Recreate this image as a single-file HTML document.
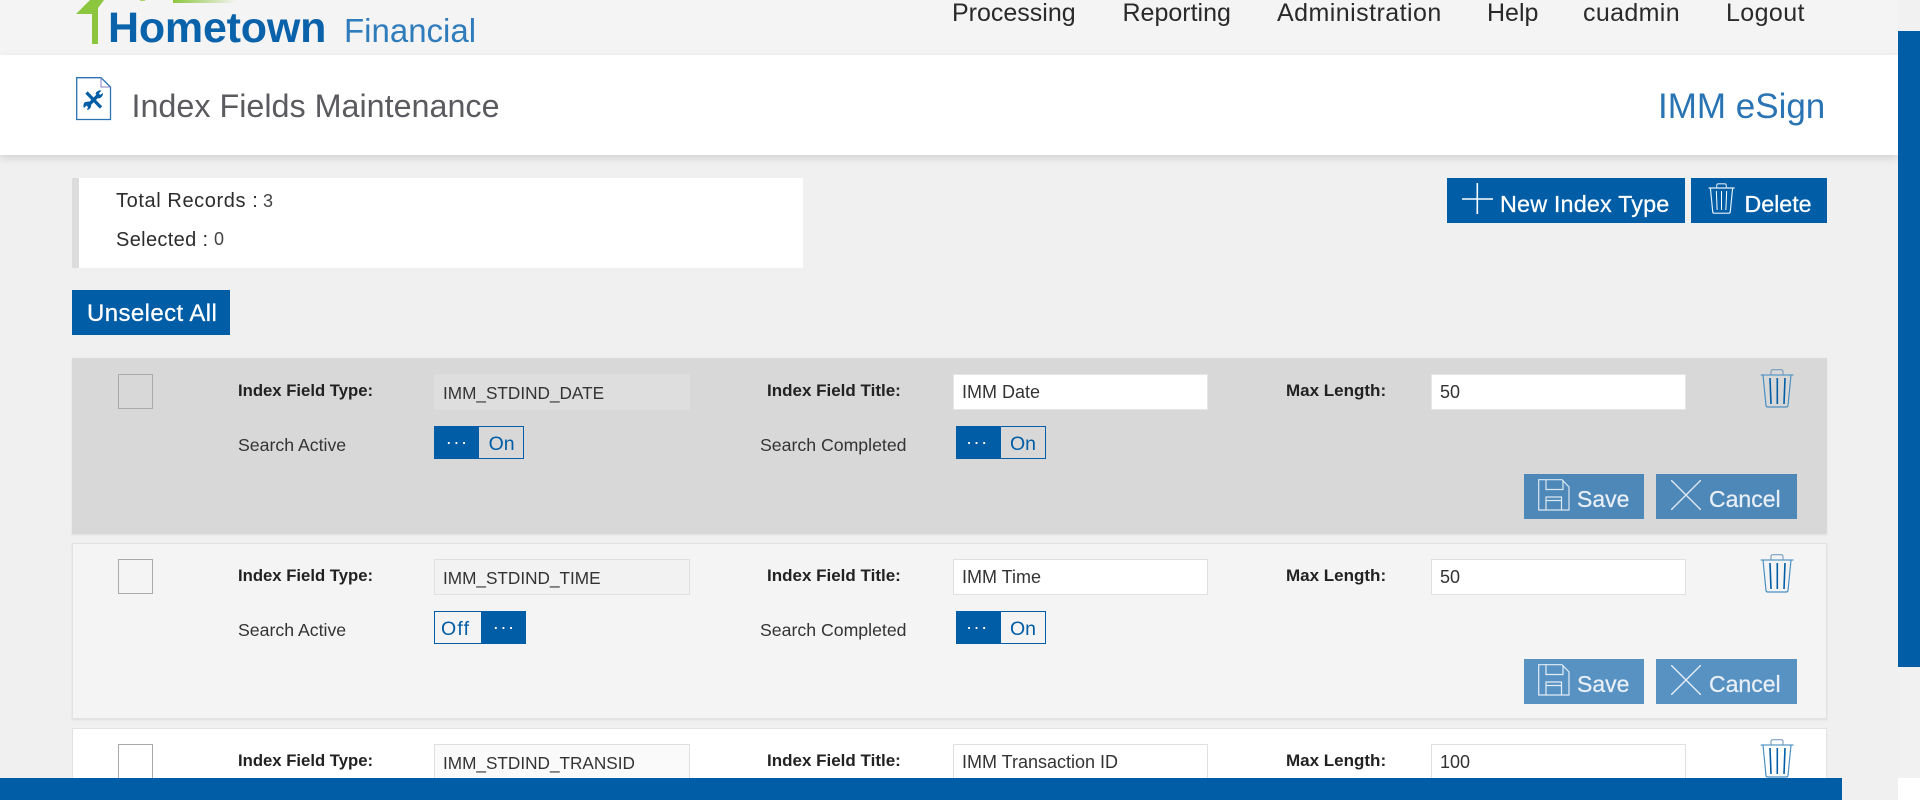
<!DOCTYPE html>
<html lang="en">
<head>
<meta charset="utf-8">
<title>Index Fields Maintenance</title>
<style>
html,body{margin:0;padding:0;width:1920px;height:800px;overflow:hidden;background:#f0f0f0;font-family:"Liberation Sans",sans-serif;color:#333}
#page{position:relative;width:1920px;height:800px;overflow:hidden;background:#f0f0f0}
.a,.t,svg{position:absolute;display:block}
.t{line-height:0;white-space:nowrap}
.nav{top:13.3px;font-size:25px;color:#2a2a2a}
.row{position:absolute;left:72px;width:1755px;height:176px}
.l{font-weight:bold;color:#222}
.i{position:absolute;top:16px;height:36px;box-sizing:border-box;border:1px solid #e0e0e0;background:#fff}
.tg{position:absolute;top:68px;height:33px;box-sizing:border-box;border:1px solid #005da6}
.bl{position:absolute;top:-1px;height:33px;background:#005da6}
.dots{font-size:13px;font-weight:bold;letter-spacing:4px;color:#fff;top:81.5px}
.on{font-size:19.5px;color:#005da6;top:86px}
.btn{position:absolute;top:116px;height:45px}
.bt{font-size:23px;color:#e8eff6;top:141px;-webkit-text-stroke:.25px #e8eff6}
.w{-webkit-text-stroke:.25px #fff}
</style>
</head>
<body>
<div id="page">

<!-- top bar -->
<div class="a" style="left:0;top:0;width:1898px;height:55px;background:#f4f4f4"></div>
<svg style="left:70px;top:0" width="180" height="46" viewBox="0 0 180 46">
  <defs><linearGradient id="g" x1="0" x2="1" y1="0" y2="0"><stop offset="0" stop-color="#8cc63f"/><stop offset="1" stop-color="#8cc63f" stop-opacity="0"/></linearGradient></defs>
  <path d="M6 14 L20 0 L34 0 L28 8 V44 H22 V14 Z" fill="#8cc63f"/>
  <rect x="70" y="0" width="5" height="1" fill="#a9d468"/>
  <rect x="103" y="0" width="64" height="3" fill="url(#g)"/>
</svg>
<span class="t" style="left:108px;top:27.8px;font-size:43px;font-weight:bold;letter-spacing:-.2px;color:#0a62ab">Hometown</span>
<span class="t" style="left:344px;top:30.9px;font-size:33px;color:#2f7cbd">Financial</span>
<span class="t nav" style="left:952px">Processing</span>
<span class="t nav" style="left:1122.5px">Reporting</span>
<span class="t nav" style="left:1277px;letter-spacing:.45px">Administration</span>
<span class="t nav" style="left:1487px">Help</span>
<span class="t nav" style="left:1583px;letter-spacing:.35px">cuadmin</span>
<span class="t nav" style="left:1726px;letter-spacing:.4px">Logout</span>

<!-- title band -->
<div class="a" style="left:0;top:55px;width:1898px;height:100px;background:#fff;box-shadow:0 3px 8px rgba(0,0,0,.13)"></div>
<svg style="left:76px;top:77px" width="36" height="44" viewBox="0 0 36 44">
  <path d="M.7 .7 H25 L34.5 10 V42.5 H.7 Z" fill="#fff" stroke="#2a72b5" stroke-width="1.3"/>
  <path d="M25 .7 V10 H34.5" fill="none" stroke="#8a7fc0" stroke-width="1"/>
  <path d="M10.5 15.5 L25 30.5" stroke="#005da6" stroke-width="3.2" fill="none"/>
  <path d="M11.5 29 L23 17.5" stroke="#005da6" stroke-width="3.4" fill="none"/>
  <path d="M19.5 16.5 A5.2 5.2 0 0 1 25.5 13.5 L23 16.3 L24 18 L27 16 A5.2 5.2 0 0 1 22.5 21.5 Z" fill="#005da6"/>
  <path d="M13 24.5 A5 5 0 0 1 15 29.5 A5 5 0 0 1 11 33 L12 30 L10.5 28.5 L8 31 A5 5 0 0 1 9 25 Z" fill="#005da6"/>
</svg>
<span class="t" style="left:131.5px;top:105.8px;font-size:32.3px;color:#5a5a5f">Index Fields Maintenance</span>
<span class="t" style="left:1658px;top:106.9px;font-size:35px;color:#2a74b3">IMM eSign</span>

<!-- stats -->
<div class="a" style="left:72px;top:178px;width:724px;height:90px;background:#fff;border-left:7px solid #dcdcdc"></div>
<span class="t" style="left:116px;top:201px;font-size:20px;letter-spacing:.6px;color:#2c2c2c">Total Records :</span>
<span class="t" style="left:263px;top:201px;font-size:18px;color:#444">3</span>
<span class="t" style="left:116px;top:239.7px;font-size:20px;letter-spacing:.35px;color:#2c2c2c">Selected :</span>
<span class="t" style="left:214px;top:239.4px;font-size:18px;color:#444">0</span>

<!-- top buttons -->
<div class="a" style="left:1447px;top:178px;width:238px;height:45px;background:#005da6"></div>
<svg style="left:1462px;top:183px" width="31" height="31" viewBox="0 0 31 31">
  <path d="M15.3 0 V31 M0 16 H31" stroke="#fff" stroke-width="1.6" fill="none"/>
</svg>
<span class="t w" style="left:1500px;top:203.6px;font-size:23.4px;letter-spacing:.15px;color:#fff">New Index Type</span>
<div class="a" style="left:1691px;top:178px;width:136px;height:45px;background:#005da6"></div>
<svg style="left:1707.5px;top:183px" width="27" height="31" viewBox="0 0 34 39">
  <path d="M.7 6.3 H33.5" stroke="#e6f2fb" stroke-width="1.5" fill="none"/>
  <path d="M11 6 V2.8 Q11 1 13 1 H21 Q23 1 23 2.8 V6" stroke="#d5e6f4" stroke-width="1.3" fill="none"/>
  <path d="M3 6.3 L6 36.5 Q6.2 38 7.8 38 H26.2 Q27.8 38 28 36.5 L31 6.3" stroke="#dff0fb" stroke-width="1.5" fill="none"/>
  <path d="M10.5 10 L11.5 34 M17 10 V34 M23.5 10 L22.5 34" stroke="#f4fafe" stroke-width="1.3" fill="none"/>
</svg>
<span class="t w" style="left:1744.5px;top:203.7px;font-size:23.2px;color:#fff">Delete</span>

<div class="a" style="left:72px;top:290px;width:158px;height:45px;background:#005da6"></div>
<span class="t w" style="left:87px;top:313.7px;font-size:24px;letter-spacing:.4px;color:#fff">Unselect All</span>

<!-- row 1 -->
<div class="row" style="top:358px;background:#d8d8d8;box-shadow:0 1px 2px rgba(0,0,0,.08)">
  <div class="a" style="left:46px;top:16px;width:33px;height:33px;border:1px solid #aaa"></div>
  <span class="t l" style="left:166px;top:32.6px;font-size:16.7px">Index Field Type:</span>
  <div class="i" style="left:362px;width:256px;background:#dedede;border-color:#dedede"></div>
  <span class="t" style="left:371px;top:34.8px;font-size:17.2px">IMM_STDIND_DATE</span>
  <span class="t l" style="left:695px;top:32.6px;font-size:17px">Index Field Title:</span>
  <div class="i" style="left:881px;width:255px;border-color:#e6e6e6"></div>
  <span class="t" style="left:890px;top:34.3px;font-size:18px">IMM Date</span>
  <span class="t l" style="left:1214px;top:32.6px;font-size:17px">Max Length:</span>
  <div class="i" style="left:1359px;width:255px;border-color:#e6e6e6"></div>
  <span class="t" style="left:1368px;top:34.3px;font-size:18px">50</span>
  <svg style="left:1688px;top:11px" width="34" height="39" viewBox="0 0 34 39">
    <path d="M.7 6 H33.5" stroke="#5a9bc8" stroke-width="1.3" fill="none"/>
    <path d="M11 6 V2.5 Q11 .7 13 .7 H21 Q23 .7 23 2.5 V6" stroke="#6b94b8" stroke-width="1" fill="none"/>
    <path d="M3 6 L6 36.5 Q6.2 38 7.8 38 H26.2 Q27.8 38 28 36.5 L31 6" stroke="#4a8fc0" stroke-width="1.2" fill="none"/>
    <path d="M10 9 L11 35 M17.3 9 V35 M25 9 L24 35" stroke="#005da6" stroke-width="1.6" fill="none"/>
  </svg>
  <span class="t" style="left:166px;top:86.9px;font-size:17.7px">Search Active</span>
  <div class="tg" style="left:362px;width:90px"><div class="bl" style="left:-1px;width:45px"></div></div>
  <span class="t dots" style="left:375px">...</span>
  <span class="t on" style="left:416.6px">On</span>
  <span class="t" style="left:688px;top:87.4px;font-size:17.7px">Search Completed</span>
  <div class="tg" style="left:884px;width:90px"><div class="bl" style="left:-1px;width:45px"></div></div>
  <span class="t dots" style="left:895.2px">...</span>
  <span class="t on" style="left:938px">On</span>
  <div class="btn" style="left:1452px;width:120px;background:#4d88b9"></div>
  <svg style="left:1466px;top:121px" width="32" height="32" viewBox="0 0 32 32">
    <path d="M.7 .7 H24 L31 8 V31 H.7 Z M8 .7 V10.5 H25 V1 M8 31 V18 H23.5 V31 M8 21.5 H23.5" fill="none" stroke="#dbe7f1" stroke-width="1.2"/>
  </svg>
  <span class="t bt" style="left:1505px">Save</span>
  <div class="btn" style="left:1584px;width:141px;background:#4d88b9"></div>
  <svg style="left:1599px;top:122px" width="30" height="30" viewBox="0 0 30 30">
    <path d="M0 0 L30 30 M30 0 L0 30" stroke="#e0e9f2" stroke-width="1.4" fill="none"/>
  </svg>
  <span class="t bt" style="left:1637px">Cancel</span>
</div>

<!-- row 2 -->
<div class="row" style="top:543px;background:#f4f4f4;box-shadow:inset 0 0 0 1px #e2e2e2,0 1px 2px rgba(0,0,0,.08)">
  <div class="a" style="left:46px;top:16px;width:33px;height:33px;border:1px solid #aaa"></div>
  <span class="t l" style="left:166px;top:32.6px;font-size:16.7px">Index Field Type:</span>
  <div class="i" style="left:362px;width:256px;background:#f2f2f2"></div>
  <span class="t" style="left:371px;top:34.8px;font-size:17.2px">IMM_STDIND_TIME</span>
  <span class="t l" style="left:695px;top:32.6px;font-size:17px">Index Field Title:</span>
  <div class="i" style="left:881px;width:255px"></div>
  <span class="t" style="left:890px;top:34.3px;font-size:18px">IMM Time</span>
  <span class="t l" style="left:1214px;top:32.6px;font-size:17px">Max Length:</span>
  <div class="i" style="left:1359px;width:255px"></div>
  <span class="t" style="left:1368px;top:34.3px;font-size:18px">50</span>
  <svg style="left:1688px;top:11px" width="34" height="39" viewBox="0 0 34 39">
    <path d="M.7 6 H33.5" stroke="#5a9bc8" stroke-width="1.3" fill="none"/>
    <path d="M11 6 V2.5 Q11 .7 13 .7 H21 Q23 .7 23 2.5 V6" stroke="#6b94b8" stroke-width="1" fill="none"/>
    <path d="M3 6 L6 36.5 Q6.2 38 7.8 38 H26.2 Q27.8 38 28 36.5 L31 6" stroke="#4a8fc0" stroke-width="1.2" fill="none"/>
    <path d="M10 9 L11 35 M17.3 9 V35 M25 9 L24 35" stroke="#005da6" stroke-width="1.6" fill="none"/>
  </svg>
  <span class="t" style="left:166px;top:86.9px;font-size:17.7px">Search Active</span>
  <div class="tg" style="left:362px;width:92px"><div class="bl" style="left:46px;width:45px"></div></div>
  <span class="t on" style="left:369px;letter-spacing:1.2px">Off</span>
  <span class="t dots" style="left:422px">...</span>
  <span class="t" style="left:688px;top:87.4px;font-size:17.7px">Search Completed</span>
  <div class="tg" style="left:884px;width:90px"><div class="bl" style="left:-1px;width:45px"></div></div>
  <span class="t dots" style="left:895.2px">...</span>
  <span class="t on" style="left:938px">On</span>
  <div class="btn" style="left:1452px;width:120px;background:#5792c3"></div>
  <svg style="left:1466px;top:121px" width="32" height="32" viewBox="0 0 32 32">
    <path d="M.7 .7 H24 L31 8 V31 H.7 Z M8 .7 V10.5 H25 V1 M8 31 V18 H23.5 V31 M8 21.5 H23.5" fill="none" stroke="#e3edf6" stroke-width="1.2"/>
  </svg>
  <span class="t bt" style="left:1505px">Save</span>
  <div class="btn" style="left:1584px;width:141px;background:#5792c3"></div>
  <svg style="left:1599px;top:122px" width="30" height="30" viewBox="0 0 30 30">
    <path d="M0 0 L30 30 M30 0 L0 30" stroke="#e6eff7" stroke-width="1.4" fill="none"/>
  </svg>
  <span class="t bt" style="left:1637px">Cancel</span>
</div>

<!-- row 3 (clipped by the footer) -->
<div class="row" style="top:728px;height:60px;background:#fff;box-shadow:inset 0 0 0 1px #e2e2e2">
  <div class="a" style="left:46px;top:16px;width:33px;height:33px;border:1px solid #aaa"></div>
  <span class="t l" style="left:166px;top:32.6px;font-size:16.7px">Index Field Type:</span>
  <div class="i" style="left:362px;width:256px;background:#fafafa"></div>
  <span class="t" style="left:371px;top:34.8px;font-size:17.2px">IMM_STDIND_TRANSID</span>
  <span class="t l" style="left:695px;top:32.6px;font-size:17px">Index Field Title:</span>
  <div class="i" style="left:881px;width:255px"></div>
  <span class="t" style="left:890px;top:34.3px;font-size:18px">IMM Transaction ID</span>
  <span class="t l" style="left:1214px;top:32.6px;font-size:17px">Max Length:</span>
  <div class="i" style="left:1359px;width:255px"></div>
  <span class="t" style="left:1368px;top:34.3px;font-size:18px">100</span>
  <svg style="left:1688px;top:11px" width="34" height="39" viewBox="0 0 34 39">
    <path d="M.7 6 H33.5" stroke="#5a9bc8" stroke-width="1.3" fill="none"/>
    <path d="M11 6 V2.5 Q11 .7 13 .7 H21 Q23 .7 23 2.5 V6" stroke="#6b94b8" stroke-width="1" fill="none"/>
    <path d="M3 6 L6 36.5 Q6.2 38 7.8 38 H26.2 Q27.8 38 28 36.5 L31 6" stroke="#4a8fc0" stroke-width="1.2" fill="none"/>
    <path d="M10 9 L11 35 M17.3 9 V35 M25 9 L24 35" stroke="#005da6" stroke-width="1.6" fill="none"/>
  </svg>
</div>

<!-- footer and scrollbar -->
<div class="a" style="left:0;top:778px;width:1842px;height:22px;background:#005da6"></div>
<div class="a" style="left:1898px;top:0;width:22px;height:778px;background:#f1f1f1"></div>
<div class="a" style="left:1898px;top:31px;width:22px;height:636px;background:#005da6"></div>
<div class="a" style="left:1898px;top:778px;width:22px;height:22px;background:#fff"></div>

</div>
</body>
</html>
